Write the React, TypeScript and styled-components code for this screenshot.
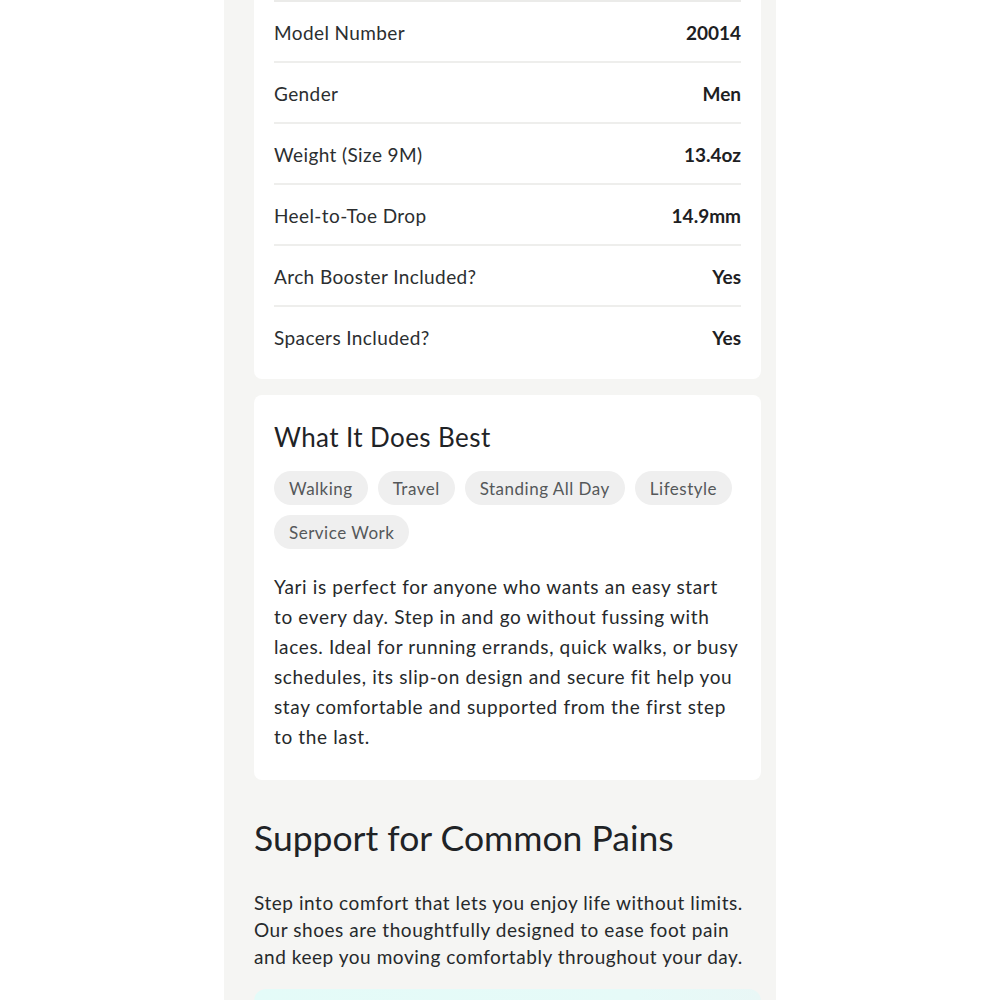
import React from 'react'
import styled, { createGlobalStyle } from 'styled-components'

const GlobalStyle = createGlobalStyle`
  html, body { margin: 0; padding: 0; background: #ffffff; }
  body { font-family: Lato, "Noto Sans", sans-serif; color: #1f2326; }
  * { box-sizing: border-box; }
`

type Spec = { label: string; value: string }
const specs: Spec[] = [
  { label: 'Model Number', value: '20014' },
  { label: 'Gender', value: 'Men' },
  { label: 'Weight (Size 9M)', value: '13.4oz' },
  { label: 'Heel-to-Toe Drop', value: '14.9mm' },
  { label: 'Arch Booster Included?', value: 'Yes' },
  { label: 'Spacers Included?', value: 'Yes' },
]

const uses = ['Walking', 'Travel', 'Standing All Day', 'Lifestyle', 'Service Work']

const Page = styled.div`
  width: 552px;
  margin: 0 auto;
  min-height: 1000px;
  background: #f5f5f3;
  padding: 0 15px 0 30px;
  display: flex;
  flex-direction: column;
`

const Card = styled.section<{ flatTop?: boolean }>`
  background: #ffffff;
  border-radius: ${(p) => (p.flatTop ? '0 0 8px 8px' : '8px')};
  padding: ${(p) => (p.flatTop ? '0 20px 13px' : '26px 20px 28px')};
`

const SpecRow = styled.div`
  display: flex;
  justify-content: space-between;
  align-items: center;
  height: 61px;
  border-top: 2px solid #eeeeec;
  padding-top: 2px;
  &:first-child { border-top-color: #ebebe9; }
`

const SpecLabel = styled.span`
  font-size: 19px;
  color: #2b2e30;
  letter-spacing: 0.4px;
`

const SpecValue = styled.span`
  font-size: 19px;
  font-weight: 700;
  color: #1d2022;
`

const CardTitle = styled.h3`
  margin: 0 0 18px;
  font-size: 26px;
  line-height: 32px;
  font-weight: 400;
  letter-spacing: 0.4px;
  color: #1f2326;
`

const Chips = styled.div`
  display: flex;
  flex-wrap: wrap;
  gap: 10px;
  margin-bottom: 23px;
`

const Chip = styled.span`
  display: inline-flex;
  align-items: center;
  height: 34px;
  padding: 0 15px;
  border-radius: 17px;
  background: #efefef;
  color: #55585a;
  font-size: 17px;
  letter-spacing: 0.5px;
`

const Body = styled.p<{ lh: number; spacing: number }>`
  margin: 0;
  font-size: 19px;
  line-height: ${(p) => p.lh}px;
  letter-spacing: ${(p) => p.spacing}px;
  color: #26292b;
`

const Gap = styled.div`
  height: 16px;
`

const SectionTitle = styled.h2`
  margin: 36px 0 29px;
  font-size: 35.5px;
  line-height: 44px;
  font-weight: 400;
  color: #1f2326;
`

const Promo = styled.div`
  margin-top: 19px;
  height: 120px;
  border-radius: 12px;
  background: linear-gradient(90deg, #e4fbf8 0%, #e6faf8 75%, #e9f7f6 100%);
`

export default function App() {
  return (
    <>
      <GlobalStyle />
      <Page>
        <Card flatTop>
          {specs.map((s) => (
            <SpecRow key={s.label}>
              <SpecLabel>{s.label}</SpecLabel>
              <SpecValue>{s.value}</SpecValue>
            </SpecRow>
          ))}
        </Card>
        <Gap />
        <Card>
          <CardTitle>What It Does Best</CardTitle>
          <Chips>
            {uses.map((u) => (
              <Chip key={u}>{u}</Chip>
            ))}
          </Chips>
          <Body lh={30} spacing={0.64}>
            Yari is perfect for anyone who wants an easy start to every day. Step in and go without
            fussing with laces. Ideal for running errands, quick walks, or busy schedules, its
            slip-on design and secure fit help you stay comfortable and supported from the first
            step to the last.
          </Body>
        </Card>
        <SectionTitle>Support for Common Pains</SectionTitle>
        <Body lh={27} spacing={0.55}>
          Step into comfort that lets you enjoy life without limits. Our shoes are thoughtfully
          designed to ease foot pain and keep you moving comfortably throughout your day.
        </Body>
        <Promo />
      </Page>
    </>
  )
}
